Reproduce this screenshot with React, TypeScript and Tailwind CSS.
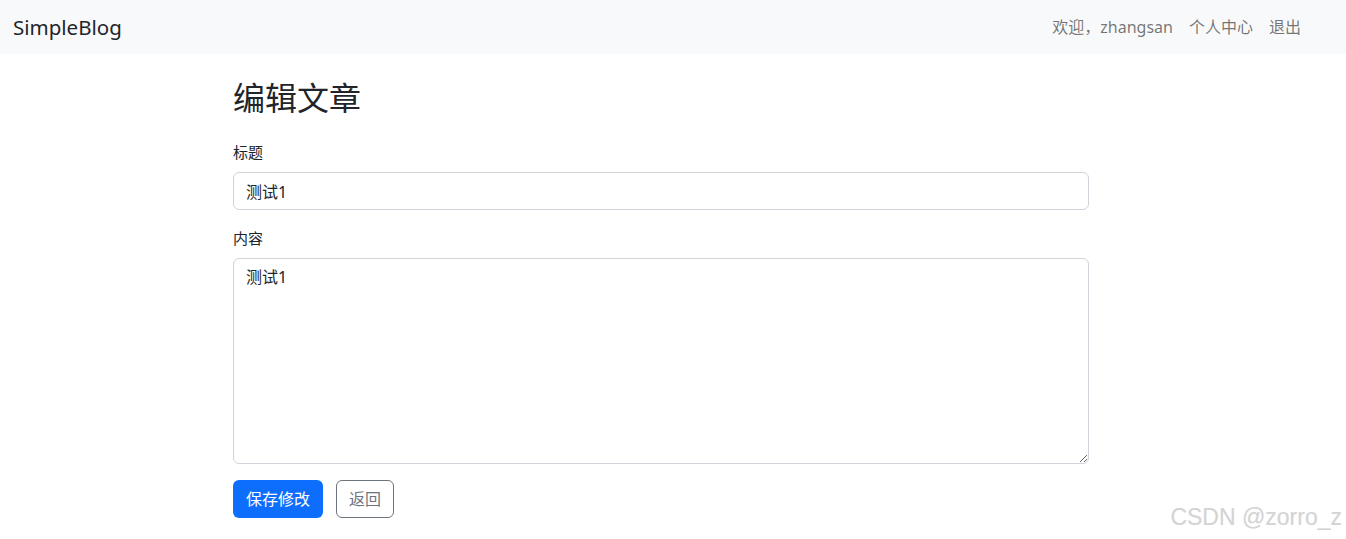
const font = "font-['Segoe_UI','Noto_Sans','Noto_Sans_CJK_SC',sans-serif]";

function Navbar() {
  return (
    <nav className="flex h-[54px] items-center justify-between bg-[#f8f9fa] pl-[13px] pr-[45px]">
      <a className="text-[20.5px] text-[#212529]">SimpleBlog</a>
      <div className="flex items-center gap-4 text-[16px] text-[rgba(0,0,0,0.55)]">
        <span>欢迎，zhangsan</span>
        <a>个人中心</a>
        <a>退出</a>
      </div>
    </nav>
  );
}

function EditForm() {
  return (
    <main className="ml-[233px] w-[856px] pt-[25px]">
      <h2 className="mb-[23px] text-[32px] leading-[1.2] font-normal text-[#212529]">
        编辑文章
      </h2>

      <div className="mb-4">
        <label className="mb-2 block text-[15px] leading-6 text-[#212529]">标题</label>
        <input
          defaultValue="测试1"
          className="block h-[38px] w-full rounded-[6px] border border-[#ced4da] px-3 text-[16px] text-[#212529] outline-none"
        />
      </div>

      <div className="mb-4">
        <label className="mb-2 block text-[15px] leading-6 text-[#212529]">内容</label>
        <textarea
          defaultValue="测试1"
          className="block h-[206px] w-full rounded-[6px] border border-[#ced4da] px-3 py-[6px] text-[16px] leading-6 text-[#212529] outline-none"
        />
      </div>

      <div className="flex items-center gap-[13px]">
        <button className="h-[38px] rounded-[6px] bg-[#0d6efd] px-[13px] text-[16px] text-white">
          保存修改
        </button>
        <button className="h-[38px] rounded-[6px] border border-[#6c757d] px-3 text-[16px] text-[#6c757d]">
          返回
        </button>
      </div>
    </main>
  );
}

export default function App() {
  return (
    <div className={`relative h-[539px] w-[1346px] overflow-hidden bg-white ${font}`}>
      <Navbar />
      <EditForm />
      {/* watermark */}
      <span className="absolute right-[4px] top-[500px] font-['Liberation_Sans',sans-serif] text-[23px] text-[#d4d4d4] [text-shadow:0_0_1px_#eee]">
        CSDN @zorro_z
      </span>
    </div>
  );
}
